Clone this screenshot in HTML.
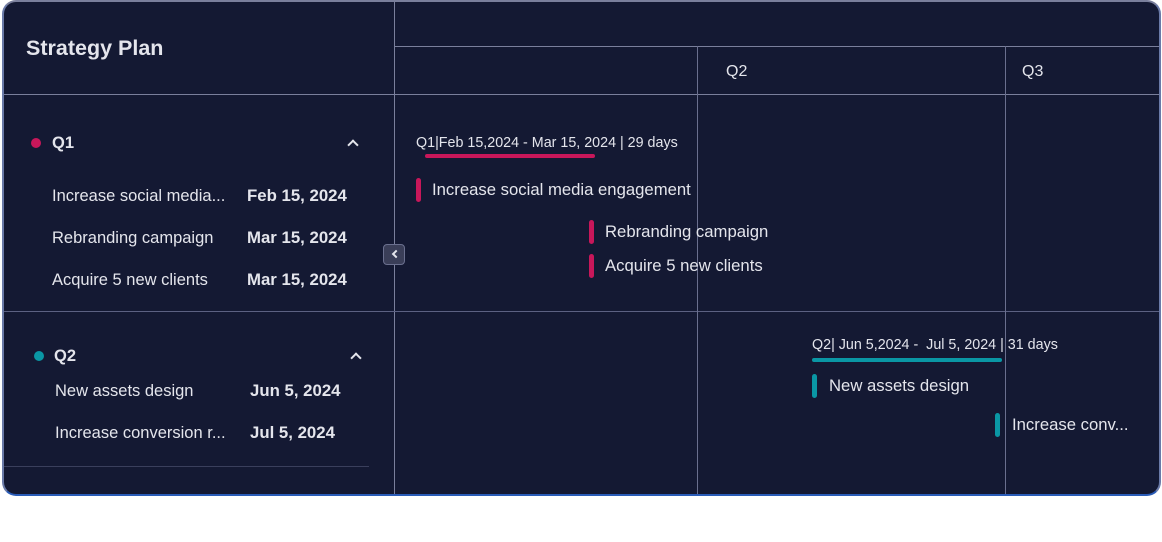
<!DOCTYPE html>
<html><head><meta charset="utf-8"><style>
*{margin:0;padding:0;box-sizing:border-box}
body{width:1162px;height:542px;background:#fff;font-family:"Liberation Sans",Arial,sans-serif;position:relative;overflow:hidden}
.card{position:absolute;left:2px;top:0;width:1159px;height:496px;background:#141933;border:2px solid #7a7f9c;border-bottom-color:#2a5cb8;border-left-color:#6a7aa8;border-right-color:#6a7aa8;border-radius:14px;overflow:hidden}
.l{position:absolute;background:#5c6182}
.t{position:absolute;color:#e4e5ec;white-space:nowrap;line-height:20px;height:20px}
.b{font-weight:bold}
.dot{position:absolute;width:10px;height:10px;border-radius:50%}
.bar{position:absolute;width:5px;height:24px;border-radius:3px}
.chev{position:absolute;width:8px;height:8px;border-left:2px solid #e4e5ec;border-top:2px solid #e4e5ec;transform:rotate(45deg)}
</style></head><body>
<div class="card">
<div class="l" style="left:390px;top:0;width:1px;height:496px;background:#7a7f9c"></div>
<div class="l" style="left:390px;top:44px;width:770px;height:1px;background:#7a7f9c"></div>
<div class="l" style="left:0;top:92px;width:1160px;height:1px;background:#7a7f9c"></div>
<div class="l" style="left:0;top:309px;width:1160px;height:1px"></div>
<div class="l" style="left:693px;top:44px;width:1px;height:460px;background:#6a6f8e"></div>
<div class="l" style="left:1001px;top:44px;width:1px;height:460px;background:#6a6f8e"></div>
<div class="l" style="left:0;top:464px;width:365px;height:1px;background:#3a3f5c"></div>
</div>
<div class="t b" style="left:26px;top:37px;font-size:21.5px;line-height:22px">Strategy Plan</div>
<div class="t" style="left:726px;top:62px;font-size:16px">Q2</div>
<div class="t" style="left:1022px;top:62px;font-size:16px">Q3</div>

<div class="dot" style="left:31px;top:138px;background:#c8175a"></div>
<div class="t b" style="left:52px;top:133px;font-size:16.5px">Q1</div>
<div class="chev" style="left:349px;top:141px"></div>
<div class="t" style="left:52px;top:186px;font-size:16.5px">Increase social media...</div>
<div class="t b" style="left:247px;top:186px;font-size:16.8px">Feb 15, 2024</div>
<div class="t" style="left:52px;top:228px;font-size:16.5px">Rebranding campaign</div>
<div class="t b" style="left:247px;top:228px;font-size:16.8px">Mar 15, 2024</div>
<div class="t" style="left:52px;top:270px;font-size:16.5px">Acquire 5 new clients</div>
<div class="t b" style="left:247px;top:270px;font-size:16.8px">Mar 15, 2024</div>

<div class="dot" style="left:34px;top:351px;background:#0a97a5"></div>
<div class="t b" style="left:54px;top:346px;font-size:16.5px">Q2</div>
<div class="chev" style="left:352px;top:354px"></div>
<div class="t" style="left:55px;top:381px;font-size:16.5px">New assets design</div>
<div class="t b" style="left:250px;top:381px;font-size:16.8px">Jun 5, 2024</div>
<div class="t" style="left:55px;top:423px;font-size:16.5px">Increase conversion r...</div>
<div class="t b" style="left:250px;top:423px;font-size:16.8px">Jul 5, 2024</div>

<div style="position:absolute;left:383px;top:244px;width:22px;height:21px;border-radius:4px;background:#3a3e58;border:1px solid #6a6f8e"></div>
<div class="chev" style="left:393px;top:251px;width:6px;height:6px;transform:rotate(-45deg)"></div>

<div class="t" style="left:416px;top:133px;font-size:14.3px">Q1|Feb 15,2024 - Mar 15, 2024 | 29 days</div>
<div style="position:absolute;left:425px;top:154px;width:170px;height:4px;border-radius:2px;background:#c8175a"></div>
<div class="bar" style="left:416px;top:178px;background:#c8175a"></div>
<div class="t" style="left:432px;top:180px;font-size:16.7px">Increase social media engagement</div>
<div class="bar" style="left:589px;top:220px;background:#c8175a"></div>
<div class="t" style="left:605px;top:222px;font-size:16.7px">Rebranding campaign</div>
<div class="bar" style="left:589px;top:254px;background:#c8175a"></div>
<div class="t" style="left:605px;top:256px;font-size:16.7px">Acquire 5 new clients</div>

<div class="t" style="left:812px;top:335px;font-size:14.3px">Q2| Jun 5,2024 -&nbsp; Jul 5, 2024 | 31 days</div>
<div style="position:absolute;left:812px;top:358px;width:190px;height:4px;border-radius:2px;background:#0a97a5"></div>
<div class="bar" style="left:812px;top:374px;background:#0a97a5"></div>
<div class="t" style="left:829px;top:376px;font-size:16.7px">New assets design</div>
<div class="bar" style="left:995px;top:413px;background:#0a97a5"></div>
<div class="t" style="left:1012px;top:415px;font-size:16.7px">Increase conv...</div>
</body></html>
